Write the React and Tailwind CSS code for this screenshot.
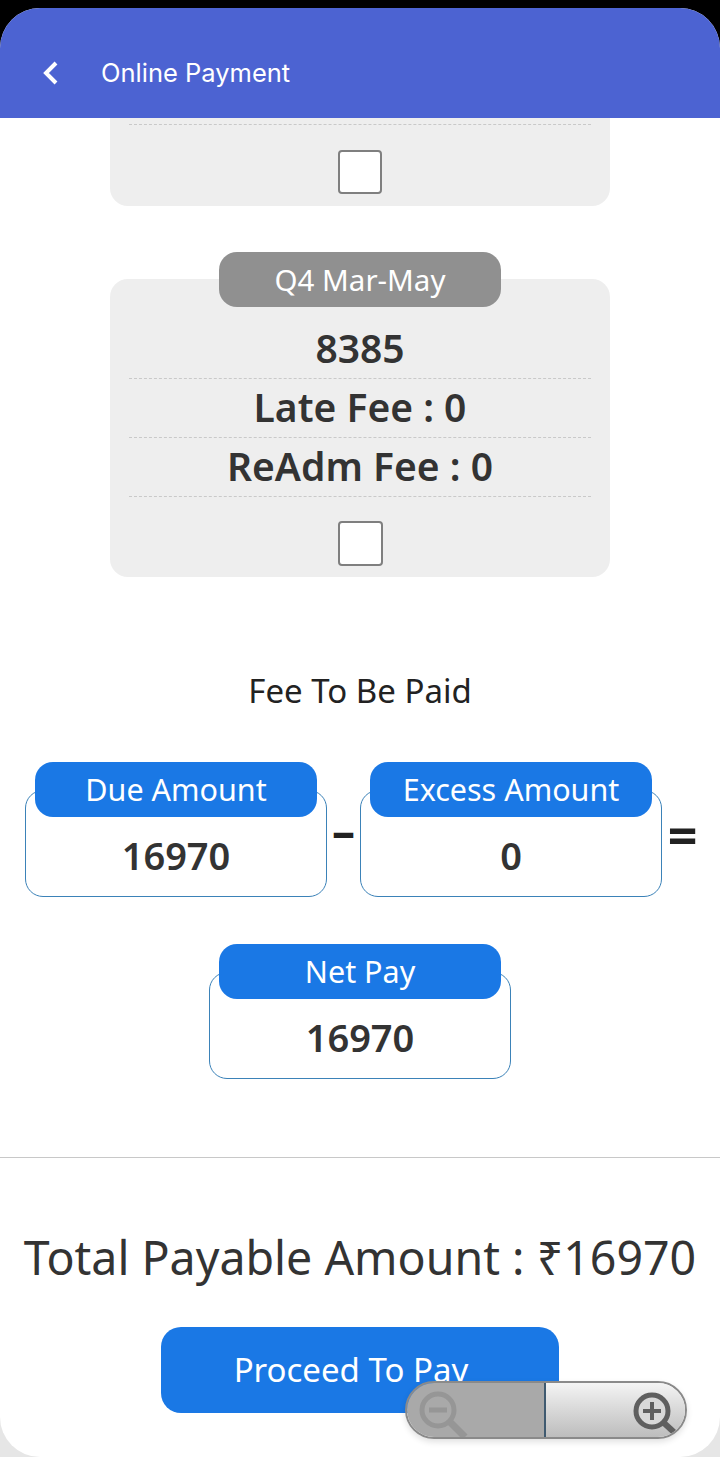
import React from 'react';

const font = 'font-["Noto_Sans",sans-serif]';

// Blue (or grey) pill sitting over the top edge of a box
const Pill = ({ children, className = 'bg-[#1a78e5] text-[30.5px]' }) => (
    <div className={`relative z-10 flex h-[55px] w-[282px] items-center justify-center rounded-[18px] text-white ${className}`}>
        {children}
    </div>
);

const AmountBox = ({ title, value }) => (
    <div className="flex w-[302px] flex-col items-center">
        <Pill>{title}</Pill>
        <div className="-mt-[27px] flex h-[107px] w-full items-center justify-center rounded-[18px] border border-[#3b82b8] bg-white pt-[24px] text-[38px] font-semibold text-[#333333]">
            {value}
        </div>
    </div>
);

const Checkbox = () => <div className="h-[45px] w-[45px] rounded-[4px] border-2 border-[#7f7f7f] bg-white" />;

const FeeRow = ({ children }) => (
    <div className="flex h-[59px] items-center justify-center border-b border-dashed border-[#c9c9c9] pb-[3px] text-[39px] font-semibold leading-none text-[#333333]">
        {children}
    </div>
);

const ZoomBar = () => (
    <div className="absolute left-[405px] top-[1381px] flex h-[58px] w-[282px] overflow-hidden rounded-full border-2 border-[#8a8a8a] shadow-[0_3px_6px_rgba(0,0,0,0.12)]">
        <div className="flex w-[139px] items-center border-r-2 border-[#3f5a70] bg-[#a9a9a9] pl-[8px]">
            <svg width="54" height="54" viewBox="0 0 54 54" fill="none" className="mt-[4px]">
                <circle cx="23" cy="25" r="16" stroke="#969696" strokeWidth="5" />
                <path d="M14 25H32" stroke="#969696" strokeWidth="5" />
                <path d="M35 37L50 52" stroke="#969696" strokeWidth="7" />
            </svg>
        </div>
        <div className="flex flex-1 items-center justify-end bg-gradient-to-b from-[#f4f4f4] to-[#bdbdbd] pr-[1px]">
            <svg width="54" height="54" viewBox="0 0 54 54" fill="none" className="mt-[4px]">
                <circle cx="22" cy="26" r="16" fill="#d8d8d8" stroke="#5f5f5f" strokeWidth="5" />
                <path d="M13 26H31M22 17V35" stroke="#5f5f5f" strokeWidth="4" />
                <path d="M34 38L47 50" stroke="#5f5f5f" strokeWidth="6" />
            </svg>
        </div>
    </div>
);

export default function App() {
    return (
        <div className={`relative h-[1457px] w-[720px] overflow-hidden bg-[linear-gradient(to_bottom,#000_50%,#e6e6e6_50%)] pt-2 ${font}`}>
            <div className="h-[1449px] overflow-hidden rounded-[40px] bg-white">
                <header className="flex h-[110px] items-center bg-[#4c63d2] pl-[41px] pt-[20px] text-white">
                    <svg width="20" height="28" viewBox="0 0 20 28" fill="none">
                        <path d="M15 4L5 14L15 24" stroke="white" strokeWidth="4" />
                    </svg>
                    <span className="ml-[40px] font-['Inter'] text-[25.5px]">Online Payment</span>
                </header>

                <div className="flex flex-col items-center">
                    <div className="flex h-[88px] w-[500px] flex-col items-center rounded-b-[18px] bg-[#eeeeee]">
                        <div className="mt-[6px] h-0 w-[462px] border-b border-dashed border-[#c9c9c9]" />
                        <div className="mt-[25px] h-[44px] w-[44px] rounded-[4px] border-2 border-[#7f7f7f] bg-white" />
                    </div>

                    <div className="mt-[46px] flex flex-col items-center">
                        <Pill className="bg-[#909090] text-[29.5px]">
                            <span className="mt-[1px]">Q4 Mar-May</span>
                        </Pill>
                        <div className="-mt-[28px] flex h-[298px] w-[500px] flex-col rounded-[18px] bg-[#eeeeee] px-[19px] pt-[41px]">
                            <FeeRow>8385</FeeRow>
                            <FeeRow>Late Fee : 0</FeeRow>
                            <FeeRow>ReAdm Fee : 0</FeeRow>
                            <div className="mt-[24px] flex justify-center">
                                <Checkbox />
                            </div>
                        </div>
                    </div>

                    <div className="mt-[94px] text-[33px] leading-[40px] text-[#222222]">Fee To Be Paid</div>

                    <div className="mt-[51px] flex w-full items-start pl-[25px]">
                        <AmountBox title="Due Amount" value="16970" />
                        <div className="mt-[38px] flex h-[60px] w-[33px] items-center justify-center text-[46px] font-bold leading-none text-[#222222]">–</div>
                        <AmountBox title="Excess Amount" value="0" />
                        <div className="mt-[43px] flex h-[60px] w-[41px] items-center justify-center text-[52px] font-bold leading-none text-[#222222]">=</div>
                    </div>

                    <div className="mt-[47px]">
                        <AmountBox title="Net Pay" value="16970" />
                    </div>

                    <div className="mt-[78px] h-px w-full bg-[#c8c8c8]" />

                    <div className="mt-[69px] text-[46.5px] leading-[60px] text-[#333333]">Total Payable Amount : ₹16970</div>

                    <button className="mt-[40px] h-[86px] w-[398px] rounded-[20px] bg-[#1a78e5] pr-[18px] text-[33px] text-white">
                        Proceed To Pay
                    </button>
                </div>
            </div>
            <ZoomBar />
        </div>
    );
}
